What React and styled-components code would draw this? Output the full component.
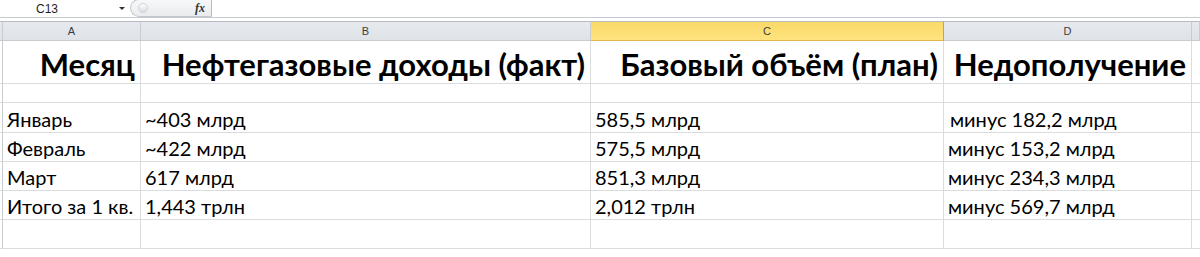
import React from "react";
import styled, { createGlobalStyle } from "styled-components";

const GlobalStyle = createGlobalStyle`
  body {
    margin: 0;
    background: #fff;
    font-family: Lato, "Open Sans", sans-serif;
  }
`;

const Page = styled.div`
  width: 1200px;
  height: 257px;
  overflow: hidden;
  background: #fff;
`;

const FormulaBar = styled.div`
  display: flex;
  align-items: stretch;
  height: 17px;
  border-bottom: 1px solid #c6c9ce;
  margin-bottom: 3px;
`;

const NameBox = styled.div`
  width: 116px;
  display: flex;
  align-items: center;
  padding-left: 36px;
  box-sizing: border-box;
  font-family: "Liberation Sans", Arial, sans-serif;
  font-size: 12px;
  color: #1e1e1e;
`;

const Arrow = styled.div`
  width: 12px;
  display: flex;
  align-items: center;
  justify-content: center;
  &::after {
    content: "";
    border-left: 3px solid transparent;
    border-right: 3px solid transparent;
    border-top: 3px solid #333;
  }
`;

const Splitter = styled.div`
  width: 82px;
  margin-left: 2px;
  margin-top: -1px;
  display: flex;
  align-items: center;
  justify-content: space-between;
  padding: 0 6px 0 7px;
  box-sizing: border-box;
  border: 1px solid #c3c6cb;
  border-right: 1px solid #b9bcc1;
  border-radius: 9px 0 0 9px;
  background: linear-gradient(#f7f8f9, #e9ebee);
`;

const Knob = styled.div`
  width: 8px;
  height: 8px;
  border-radius: 50%;
  background: linear-gradient(#ffffff, #d7dadf);
  border: 1px solid #d0d3d8;
`;

const Fx = styled.span`
  font-family: "Liberation Serif", serif;
  font-style: italic;
  font-weight: bold;
  font-size: 12px;
  color: #333;
`;

const Sheet = styled.div`
  display: grid;
  grid-template-columns: 3px 138px 450px 353px 248px 8px;
  grid-template-rows: 20px 43px 19px 30px 29px 29px 29px 29px 10px;
`;

const ColHead = styled.div`
  box-sizing: border-box;
  border-top: 1px solid #b8bcc2;
  border-right: 1px solid ${(p) => (p.$active ? "#c9a24c" : "#c8ccd1")};
  border-bottom: 1px solid ${(p) => (p.$active ? "#e3b54d" : "#c8ccd1")};
  background: ${(p) =>
    p.$active
      ? "linear-gradient(#f9d968, #ffe37f)"
      : "linear-gradient(#e6e9ed, #dfe2e7)"};
  display: flex;
  align-items: center;
  justify-content: center;
  font-family: "Liberation Sans", Arial, sans-serif;
  font-size: 11px;
  color: #3d3d3d;
`;

const Cell = styled.div`
  box-sizing: border-box;
  border-right: 1px solid #dadcdd;
  border-bottom: 1px solid #dadcdd;
  display: flex;
  align-items: flex-end;
  justify-content: ${(p) => (p.$right ? "flex-end" : "flex-start")};
  padding: 0 5px ${(p) => (p.$head ? "0" : "1px")} ${(p) => p.$indent || 4}px;
  white-space: nowrap;
  color: #000;
  font-size: ${(p) => (p.$head ? "31px" : "20px")};
  font-weight: ${(p) => (p.$head ? 700 : 400)};
  line-height: 1.2;
`;

const RowHead = styled(Cell)`
  border-right: 1px solid #c8ccd1;
  padding: 0;
`;

const columns = ["A", "B", "C", "D"];

const rows = [
  ["Январь", "~403 млрд", "585,5 млрд", "минус 182,2 млрд"],
  ["Февраль", "~422 млрд", "575,5 млрд", "минус 153,2 млрд"],
  ["Март", "617 млрд", "851,3 млрд", "минус 234,3 млрд"],
  ["Итого за 1 кв.", "1,443 трлн", "2,012 трлн", "минус 569,7 млрд"],
];

const heads = [
  "Месяц",
  "Нефтегазовые доходы (факт)",
  "Базовый объём (план)",
  "Недополучение",
];

export default function App() {
  return (
    <Page>
      <GlobalStyle />
      <FormulaBar>
        <NameBox>C13</NameBox>
        <Arrow />
        <Splitter>
          <Knob />
          <Fx>fx</Fx>
        </Splitter>
      </FormulaBar>
      <Sheet>
        <ColHead />
        {columns.map((c) => (
          <ColHead key={c} $active={c === "C"}>
            {c}
          </ColHead>
        ))}
        <ColHead />

        <RowHead />
        {heads.map((h) => (
          <Cell key={h} $head $right>
            {h}
          </Cell>
        ))}
        <Cell />

        <RowHead />
        {columns.map((c) => (
          <Cell key={c} />
        ))}
        <Cell />

        {rows.map((r, i) => (
          <React.Fragment key={i}>
            <RowHead />
            {r.map((v, j) => (
              <Cell key={j} $indent={i === 0 && j === 3 ? 6 : 4}>
                {v}
              </Cell>
            ))}
            <Cell />
          </React.Fragment>
        ))}

        <RowHead />
        {columns.map((c) => (
          <Cell key={c} />
        ))}
        <Cell />
      </Sheet>
    </Page>
  );
}
